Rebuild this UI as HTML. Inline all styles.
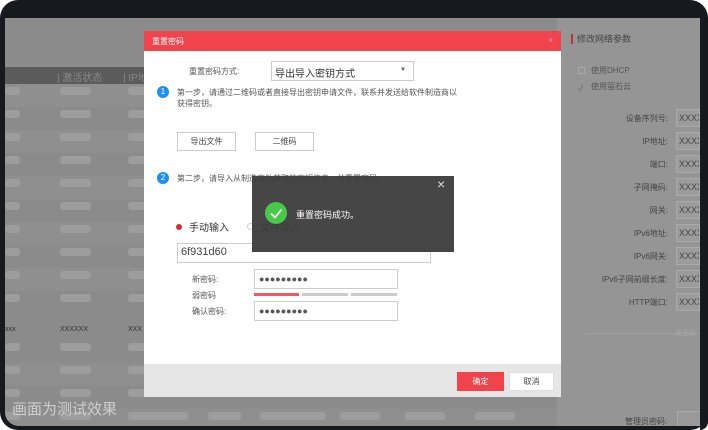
<!DOCTYPE html>
<html><head><meta charset="utf-8"><style>
*{margin:0;padding:0;box-sizing:border-box}
body{width:708px;height:430px;overflow:hidden;background:#fff;font-family:"Liberation Sans","Noto Sans CJK SC",sans-serif;position:relative}
.a{position:absolute}
.pill{position:absolute;height:8px;background:#9d9d9d;border-radius:3px}
.t{font-size:8px;color:#555;position:absolute;white-space:nowrap}
</style></head><body>
<div class="a" style="left:0;top:0;width:708px;height:430px;background:#16191d;border-radius:18px"></div>
<div class="a" style="left:5px;top:18px;width:695px;height:408px;background:#8b8b8b;border-radius:0 0 0 14px;overflow:hidden">
  <div class="a" style="left:0;top:49px;width:560px;height:18px;background:#5b5b5b"></div>
  <div class="a" style="left:52px;top:51px;color:#8a8a8a;font-size:10px">| 激活状态</div>
  <div class="a" style="left:118px;top:51px;color:#8a8a8a;font-size:10px">| IP地址</div>
  <div id="rows"></div>
  <div class="a" style="left:552px;top:0;width:143px;height:408px;background:#959595"></div>
  <div class="a" style="left:566px;top:16px;width:2px;height:10px;background:#b33"></div>
  <div class="a" style="left:572px;top:14px;font-size:9px;color:#444">修改网络参数</div>
  <div class="a" style="left:573px;top:49px;width:7px;height:7px;border:1px solid #aaa"></div>
  <div class="a" style="left:586px;top:47px;font-size:8px;color:#555">使用DHCP</div>
  <div class="a" style="left:573px;top:65px;font-size:8px;color:#666">✓</div>
  <div class="a" style="left:586px;top:63px;font-size:8px;color:#555">使用萤石云</div>
  <div class="a" style="left:672px;top:393px;width:25px;height:18px;border:1px solid #aaa;background:#999"></div>
  <div class="a" style="left:620px;top:398px;font-size:8px;color:#444">管理员密码:</div>
  <div class="a" style="left:580px;top:315px;width:115px;height:1px;background:#a0a0a0"></div>
  <div class="a" style="left:670px;top:310px;font-size:7px;color:#aaa">安全码</div>
  <div class="a" style="left:7px;top:380px;font-size:15px;color:#cfcfcf">画面为测试效果</div>
</div>
<div id="rf"></div>
<!-- dialog -->
<div class="a" style="left:144px;top:31px;width:417px;height:366px;background:#fff">
  <div class="a" style="left:0;top:0;width:417px;height:20px;background:#f0434b"></div>
  <div class="a" style="left:8px;top:5px;font-size:8px;color:#fff">重置密码</div>
  <div class="a" style="left:404px;top:4px;font-size:9px;color:#f9c">×</div>
  <div class="t" style="left:45px;top:35px">重置密码方式:</div>
  <div class="a" style="left:127px;top:30px;width:143px;height:20px;border:1px solid #ccc"></div>
  <div class="a" style="left:131px;top:34px;font-size:10px;color:#333">导出导入密钥方式</div>
  <div class="a" style="left:256px;top:36px;font-size:6px;color:#555">▼</div>
  <div class="a" style="left:13px;top:55px;width:12px;height:12px;border-radius:50%;background:#1d8ff0;color:#fff;font-size:8px;text-align:center;line-height:12px">1</div>
  <div class="t" style="left:33px;top:56px">第一步，请通过二维码或者直接导出密钥申请文件，联系并发送给软件制造商以</div>
  <div class="t" style="left:33px;top:67px">获得密钥。</div>
  <div class="a" style="left:33px;top:101px;width:59px;height:19px;border:1px solid #ccc;font-size:8px;color:#444;text-align:center;line-height:17px">导出文件</div>
  <div class="a" style="left:111px;top:101px;width:59px;height:19px;border:1px solid #ccc;font-size:8px;color:#444;text-align:center;line-height:17px">二维码</div>
  <div class="a" style="left:13px;top:141px;width:12px;height:12px;border-radius:50%;background:#1d8ff0;color:#fff;font-size:8px;text-align:center;line-height:12px">2</div>
  <div class="t" style="left:33px;top:142px">第二步，请导入从制造商处获取的密钥信息，并重置密码。</div>
  <div class="a" style="left:32px;top:193px;width:6px;height:6px;border-radius:50%;background:#c33"></div>
  <div class="a" style="left:45px;top:188px;font-size:10px;color:#333">手动输入</div>
  <div class="a" style="left:103px;top:192px;width:7px;height:7px;border-radius:50%;border:1px solid #ccc"></div>
  <div class="a" style="left:116px;top:188px;font-size:10px;color:#333">文件导入</div>
  <div class="a" style="left:33px;top:212px;width:254px;height:20px;border:1px solid #ccc"></div>
  <div class="a" style="left:37px;top:215px;font-size:11px;color:#444">6f931d60</div>
  <div class="t" style="left:48px;top:243px">新密码:</div>
  <div class="a" style="left:110px;top:238px;width:144px;height:20px;border:1px solid #ccc;font-size:9px;color:#555;padding-left:4px;line-height:18px">●●●●●●●●●</div>
  <div class="t" style="left:48px;top:259px">弱密码</div>
  <div class="a" style="left:110px;top:262px;width:45px;height:3px;background:#ee5a5f"></div>
  <div class="a" style="left:158px;top:262px;width:46px;height:3px;background:#ccc"></div>
  <div class="a" style="left:207px;top:262px;width:46px;height:3px;background:#ccc"></div>
  <div class="t" style="left:48px;top:275px">确认密码:</div>
  <div class="a" style="left:110px;top:270px;width:144px;height:20px;border:1px solid #ccc;font-size:9px;color:#555;padding-left:4px;line-height:18px">●●●●●●●●●</div>
  <div class="a" style="left:0;top:333px;width:417px;height:33px;background:#e6e6e6"></div>
  <div class="a" style="left:313px;top:341px;width:47px;height:19px;background:#f0434b;color:#fff;font-size:8px;text-align:center;line-height:19px">确定</div>
  <div class="a" style="left:365px;top:341px;width:45px;height:19px;background:#fff;border:1px solid #ddd;color:#444;font-size:8px;text-align:center;line-height:17px">取消</div>
</div>
<!-- toast -->
<div class="a" style="left:252px;top:176px;width:202px;height:76px;background:rgba(60,60,60,0.95)">
  <div class="a" style="left:185px;top:0px;font-size:14px;color:#ddd">×</div>
  <div class="a" style="left:13px;top:26px;width:22px;height:22px;border-radius:50%;background:#49c94a"></div>
  <svg class="a" style="left:13px;top:26px" width="22" height="22"><path d="M6 11.5 L10 15.5 L16.5 7.5" stroke="#fff" stroke-width="1.6" fill="none"/></svg>
  <div class="a" style="left:44px;top:32px;font-size:9px;color:#fff">重置密码成功。</div>
</div>
<script>
var r=document.getElementById('rows'),h='';
var ys=[73,96,119,142,165,188,211,234,257,280,-1,329,352,375,398];
for(var i=0;i<ys.length;i++){
 if(i==10){h+='<div class="a" style="left:0;top:308px;font-size:7px;color:#333">xxx</div><div class="a" style="left:55px;top:308px;font-size:7px;color:#333">XXXXXX</div><div class="a" style="left:123px;top:308px;font-size:7px;color:#333">XXX</div>';continue;}
 var y=ys[i];
 if(i%2==0)h+='<div class="a" style="left:0;top:'+(y-7)+'px;width:552px;height:23px;background:#8f8f8f"></div>';
 h+='<div class="pill" style="left:0;top:'+(y-4)+'px;width:15px"></div><div class="pill" style="left:55px;top:'+(y-4)+'px;width:31px"></div><div class="pill" style="left:123px;top:'+(y-4)+'px;width:22px"></div>';
 if(y>360)h+='<div class="pill" style="left:125px;top:'+(y-4)+'px;width:58px"></div><div class="pill" style="left:203px;top:'+(y-4)+'px;width:33px"></div><div class="pill" style="left:255px;top:'+(y-4)+'px;width:66px"></div><div class="pill" style="left:335px;top:'+(y-4)+'px;width:40px"></div><div class="pill" style="left:400px;top:'+(y-4)+'px;width:40px"></div><div class="pill" style="left:470px;top:'+(y-4)+'px;width:40px"></div>';
}
r.innerHTML=h;
var f='',labs=[['设备序列号:',118],['IP地址:',141],['端口:',164],['子网掩码:',187],['网关:',210],['IPv6地址:',233],['IPv6网关:',256],['IPv6子网前缀长度:',279],['HTTP端口:',302]];
for(var j=0;j<labs.length;j++){var y=labs[j][1];
f+='<div class="a" style="right:40px;top:'+(y-5)+'px;font-size:8px;color:#444;text-align:right">'+labs[j][0]+'</div><div class="a" style="left:676px;top:'+(y-9)+'px;width:24px;height:18px;background:#9c9c9c;border:1px solid #aaa;font-size:9px;color:#444;padding-left:2px;line-height:16px;overflow:hidden">XXXX</div>';}
document.getElementById('rf').innerHTML=f;
</script>
<div class="a" style="left:700px;top:18px;width:8px;height:412px;background:#16191d;border-radius:0 0 14px 0"></div>
</body></html>
